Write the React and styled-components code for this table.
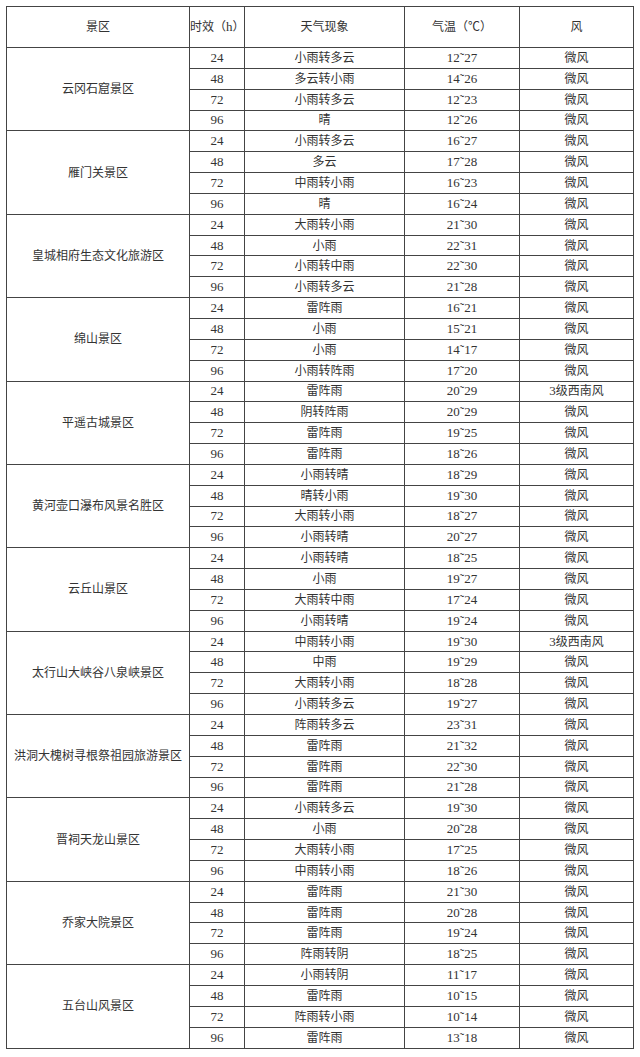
import React from "react";
import styled, { createGlobalStyle } from "styled-components";

const Global = createGlobalStyle`
  html, body { margin: 0; padding: 0; background: #ffffff; }
  body { font-family: "Liberation Serif", "Noto Sans CJK SC", serif; color: #333; }
`;

const Page = styled.div`
  padding: 6px 0 0 6px;
  width: 640px;
  box-sizing: border-box;
`;

const Table = styled.table`
  border-collapse: collapse;
  table-layout: fixed;
  width: 627px;
`;

const Cell = styled.td`
  border: 1px solid #444;
  padding: 0;
  text-align: center;
  vertical-align: middle;
  white-space: nowrap;
  overflow: hidden;
  font-size: 12px;
  line-height: 14px;
  color: #333;
  font-family: "Liberation Serif", "Noto Sans CJK SC", serif;
`;

const HeadCell = styled(Cell).attrs({ as: "th" })`
  font-weight: normal;
`;

const Num = styled.span`
  font-family: "Liberation Serif", serif;
  font-size: 13px;
`;

const HeadRow = styled.tr`
  height: 41px;
`;

const DataRow = styled.tr`
  height: 20.85px;
`;

const Area = styled(Cell)`
  letter-spacing: 0;
`;

const data = [
  ["云冈石窟景区", [["小雨转多云", "12˜27"], ["多云转小雨", "14˜26"], ["小雨转多云", "12˜23"], ["晴", "12˜26"]]],
  ["雁门关景区", [["小雨转多云", "16˜27"], ["多云", "17˜28"], ["中雨转小雨", "16˜23"], ["晴", "16˜24"]]],
  ["皇城相府生态文化旅游区", [["大雨转小雨", "21˜30"], ["小雨", "22˜31"], ["小雨转中雨", "22˜30"], ["小雨转多云", "21˜28"]]],
  ["绵山景区", [["雷阵雨", "16˜21"], ["小雨", "15˜21"], ["小雨", "14˜17"], ["小雨转阵雨", "17˜20"]]],
  ["平遥古城景区", [["雷阵雨", "20˜29", "3级西南风"], ["阴转阵雨", "20˜29"], ["雷阵雨", "19˜25"], ["雷阵雨", "18˜26"]]],
  ["黄河壶口瀑布风景名胜区", [["小雨转晴", "18˜29"], ["晴转小雨", "19˜30"], ["大雨转小雨", "18˜27"], ["小雨转晴", "20˜27"]]],
  ["云丘山景区", [["小雨转晴", "18˜25"], ["小雨", "19˜27"], ["大雨转中雨", "17˜24"], ["小雨转晴", "19˜24"]]],
  ["太行山大峡谷八泉峡景区", [["中雨转小雨", "19˜30", "3级西南风"], ["中雨", "19˜29"], ["大雨转小雨", "18˜28"], ["小雨转多云", "19˜27"]]],
  ["洪洞大槐树寻根祭祖园旅游景区", [["阵雨转多云", "23˜31"], ["雷阵雨", "21˜32"], ["雷阵雨", "22˜30"], ["雷阵雨", "21˜28"]]],
  ["晋祠天龙山景区", [["小雨转多云", "19˜30"], ["小雨", "20˜28"], ["大雨转小雨", "17˜25"], ["中雨转小雨", "18˜26"]]],
  ["乔家大院景区", [["雷阵雨", "21˜30"], ["雷阵雨", "20˜28"], ["雷阵雨", "19˜24"], ["阵雨转阴", "18˜25"]]],
  ["五台山风景区", [["小雨转阴", "11˜17"], ["雷阵雨", "10˜15"], ["阵雨转小雨", "10˜14"], ["雷阵雨", "13˜18"]]],
];

const hours = ["24", "48", "72", "96"];

function Wind({ text }) {
  if (text.startsWith("3")) {
    return (
      <>
        <Num>3</Num>级西南风
      </>
    );
  }
  return text;
}

export default function App() {
  return (
    <Page>
      <Global />
      <Table>
        <colgroup>
          <col style={{ width: 183 }} />
          <col style={{ width: 55 }} />
          <col style={{ width: 160 }} />
          <col style={{ width: 115 }} />
          <col style={{ width: 114 }} />
        </colgroup>
        <thead>
          <HeadRow>
            <HeadCell>景区</HeadCell>
            <HeadCell>时效（<Num>h</Num>）</HeadCell>
            <HeadCell>天气现象</HeadCell>
            <HeadCell>气温（℃）</HeadCell>
            <HeadCell>风</HeadCell>
          </HeadRow>
        </thead>
        <tbody>
          {data.map(([name, rows]) =>
            rows.map((r, i) => (
              <DataRow key={name + i}>
                {i === 0 && <Area rowSpan={4}>{name}</Area>}
                <Cell><Num>{hours[i]}</Num></Cell>
                <Cell>{r[0]}</Cell>
                <Cell><Num>{r[1]}</Num></Cell>
                <Cell><Wind text={r[2] || "微风"} /></Cell>
              </DataRow>
            ))
          )}
        </tbody>
      </Table>
    </Page>
  );
}
